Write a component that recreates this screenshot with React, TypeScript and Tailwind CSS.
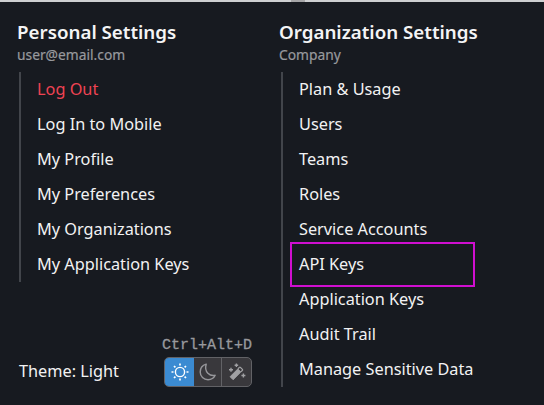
import React from "react";

const personal = ["Log Out", "Log In to Mobile", "My Profile", "My Preferences", "My Organizations", "My Application Keys"];
const organization = ["Plan & Usage", "Users", "Teams", "Roles", "Service Accounts", "API Keys", "Application Keys", "Audit Trail", "Manage Sensitive Data"];

function Section({ title, subtitle, items }: { title: string; subtitle: string; items: string[] }) {
  return (
    <section>
      <h2 className="h-6 whitespace-nowrap text-[18.75px] font-semibold leading-6 text-[#f4f4f5]">{title}</h2>
      <p className="h-[28px] text-[13.8px] leading-[22px] text-[#98999d] [-webkit-text-stroke:0.2px_#98999d]">{subtitle}</p>
      <ul className="ml-[2px] w-fit border-l-2 border-[#42454b] pl-4">
        {items.map((item) => (
          <li key={item} className={`relative h-[35px] whitespace-nowrap text-[16.3px] leading-[35px] ${item === "Log Out" ? "text-[#ef4353]" : "text-[#f2f2f3]"}`}>
            <span className="block h-[35px] leading-[34px]">{item}</span>
            {item === "API Keys" && <span className="absolute -left-[9px] -top-[5px] h-[45px] w-[185px] border-2 border-[#d00fd0]" />}
          </li>
        ))}
      </ul>
    </section>
  );
}

function Sun() {
  return (
    <svg width="18" height="18" viewBox="0 0 18 18" fill="none" stroke="#fff" strokeWidth="1.4">
      <circle cx="9" cy="9" r="4.6" />
      <path d="M9 .5v2M9 15.5v2M.5 9h2M15.5 9h2M3 3l1.4 1.4M13.6 13.6 15 15M3 15l1.4-1.4M13.6 4.4 15 3" strokeWidth="1.7" />
    </svg>
  );
}

function Moon() {
  return (
    <svg width="18" height="18" viewBox="0 0 18 18" fill="none" stroke="#96969a" strokeWidth="1.4" strokeLinejoin="round">
      <path d="M7.2 1.2C3.6 2.3 1.2 5.4 1.2 9c0 4.3 3.5 7.7 7.8 7.7 3.3 0 6-1.8 7.2-4.4C11 13.4 4.8 9.2 7.2 1.2Z" />
    </svg>
  );
}

function Wand() {
  return (
    <svg width="18" height="18" viewBox="0 0 18 18" fill="none" stroke="#a0a0a3">
      <path d="m2.1 13.7 7.7-7.7 3 3-7.7 7.7Z" fill="#a0a0a3" strokeWidth="1" strokeLinejoin="round" />
      <path d="m10 5.8 1.4-1.4q.5-.5 1 0l2 2q.5.5 0 1L13 8.8" strokeWidth="1.3" />
      <path d="M3 4.7v4M1 6.7h4M8.4.5v3.6M6.6 2.3h3.6M15.4 10.5v4M13.4 12.5h4" strokeWidth="1.4" />
    </svg>
  );
}

export default function App() {
  return (
    <main className="h-[405px] w-[544px] overflow-hidden bg-[#171a20] font-['Noto_Sans',sans-serif]">
      <div className="h-[2px] bg-[#cecfd1] pl-[291px]">
        <div className="h-full w-[14px] bg-[#a5a5a7]" />
      </div>
      <div className="grid grid-cols-[262px_1fr] pl-[17px] pt-[18px]">
        <div className="flex flex-col">
          <Section title="Personal Settings" subtitle="user@email.com" items={personal} />
          <footer className="ml-[2px] mt-[53px] w-[233px]">
            <div className="h-[22px] text-right font-['Liberation_Mono',monospace] text-[15px] leading-[22px] text-[#98999d] [-webkit-text-stroke:0.3px_#98999d]">Ctrl+Alt+D</div>
            <div className="flex items-center justify-between">
              <span className="-mt-[2px] text-[16.3px] leading-[28px] text-[#f2f2f3]">Theme: Light</span>
              <div className="flex h-[30px] w-[88px] overflow-hidden rounded-[5px] border border-[#626266] bg-[#39383c]">
                <button className="flex w-[29px] items-center justify-center bg-[#3b8bd2]" aria-label="Light"><Sun /></button>
                <button className="flex w-[28px] items-center justify-center border-r border-[#626266]" aria-label="Dark"><Moon /></button>
                <button className="flex flex-1 items-center justify-center" aria-label="Auto"><Wand /></button>
              </div>
            </div>
          </footer>
        </div>
        <Section title="Organization Settings" subtitle="Company" items={organization} />
      </div>
    </main>
  );
}
